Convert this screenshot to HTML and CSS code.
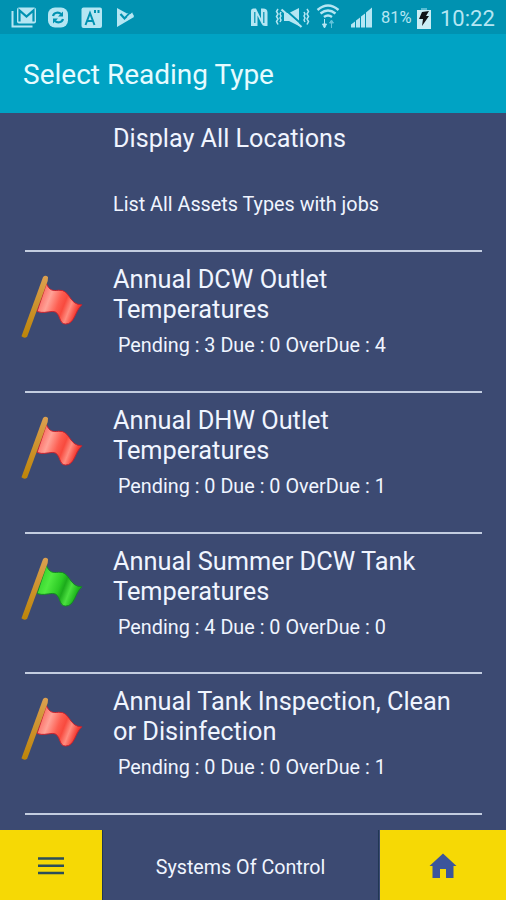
FILE: index.html
```html
<!DOCTYPE html>
<html lang="en">
<head>
  <meta charset="UTF-8" />
  <meta name="viewport" content="width=device-width, initial-scale=1.0"/>
  <title>Select Reading Type</title>
  <link rel="stylesheet" href="styles.css">
</head>
<body>
  <!-- Shared flag shape and gradients -->
  <svg class="defs" width="0" height="0">
    <defs>
      <linearGradient id="red" x1="0" y1="0" x2="1" y2="0.35">
        <stop offset="0" stop-color="#f8403a"/>
        <stop offset="0.36" stop-color="#ffa297"/>
        <stop offset="0.58" stop-color="#fd5d50"/>
        <stop offset="0.7" stop-color="#f84a3e"/>
        <stop offset="0.84" stop-color="#ff8d80"/>
        <stop offset="1" stop-color="#f53a30"/>
      </linearGradient>
      <linearGradient id="green" x1="0" y1="0" x2="1" y2="0.35">
        <stop offset="0" stop-color="#22c41e"/>
        <stop offset="0.36" stop-color="#50ea40"/>
        <stop offset="0.6" stop-color="#2ccb25"/>
        <stop offset="0.7" stop-color="#1cab1b"/>
        <stop offset="0.84" stop-color="#4ce040"/>
        <stop offset="1" stop-color="#1cb41b"/>
      </linearGradient>
      <linearGradient id="wood" x1="0" y1="0" x2="0" y2="1">
        <stop offset="0" stop-color="#dca050"/>
        <stop offset="1" stop-color="#bd8508"/>
      </linearGradient>
      <path id="cloth" d="M108 130C118 152 128 152 145 150C180 146 175 194 215 194C194 212 194 252 166 252C143 252 153 214 127 214C108 215 98 220 80 214Z"/>
      <path id="pole" d="M98 110Q105 102 113 110L112 122L50 290Q42 297 33 289Z"/>
    </defs>
  </svg>

  <div class="screen">
    <div class="status-bar">
      <svg class="icons-left" width="136" height="34" viewBox="0 0 136 34">
        <path d="M12.5 11v15.500h20" fill="none" stroke="#b5e6f3" stroke-width="2"/>
        <path d="M17 9.500q0-2 2-2h15q2 0 2 2v12q0 2-2 2h-15q-2 0-2-2z" fill="#b5e6f3"/>
        <path d="M19.500 21.500v-11l7 6 7-6v11" fill="none" stroke="#0092b1" stroke-width="2.200"/>
        <rect x="48" y="7.500" width="20" height="20" rx="7" fill="#b5e6f3"/>
        <path d="M53 16c1-4 6-4 8-2M63 19c-1 4-6 4-8 2" fill="none" stroke="#0092b1" stroke-width="2.200"/>
        <path d="M63 11.500v5h-5zM53 23.500v-5h5z" fill="#0092b1"/>
        <rect x="81.500" y="7.500" width="20.500" height="20.500" rx="2" fill="#b5e6f3"/>
        <path d="M85.500 25l4.500-12 4.500 12M87 21h6M95 10v3M98.500 10v3" fill="none" stroke="#0092b1" stroke-width="2"/>
        <path d="M117 8l10 5.500 5-1.500 2 5-17 10z" fill="#b5e6f3"/>
        <path d="M120.500 14l4 4.500 7-7" fill="none" stroke="#0092b1" stroke-width="2.200"/>
        <path d="M130 14l4 1-4 4-3-2z" fill="#b5e6f3"/>
      </svg>
      <svg class="icons-right" width="130" height="34" viewBox="246 0 130 34">
        <path d="M251 26v-15q0-2.500 2.500-2.500h2.500l5 10v-10h2q4.500 0 4.500 4v13.500h-2.500q-2.500 0-3.500-2.500l-4-8v10.500z" fill="#b5e6f3"/>
        <path d="M254.800 12v11M263.800 12v11" stroke="#0092b1" stroke-width="1.200"/>
        <g fill="none" stroke="#b5e6f3" stroke-width="1.500">
          <path d="M278 9l-1.500 2.500 1.500 2.500-1.500 2.500 1.500 2.500-1.500 2.500 1.500 3M281 12l-1 2 1 2-1 2 1 2-1 2M304 12l1 2-1 2 1 2-1 2 1 2M307 9l1.500 2.500-1.500 2.500 1.500 2.500-1.500 2.500 1.500 2.500-1.500 3"/>
        </g>
        <path d="M284 13h5l10-5v18l-10-5h-5z" fill="#b5e6f3"/>
        <path d="M284 8.500l18 16" stroke="#0092b1" stroke-width="2"/>
        <path d="M281.500 9.500l20 17.500" stroke="#b5e6f3" stroke-width="2.200"/>
        <path d="M317.500 10q10.500-9 21 0M320.500 13.500q7.500-6 15 0M324 17q4-3 8 0" fill="none" stroke="#b5e6f3" stroke-width="2.400"/>
        <path d="M324.500 19v6M322.500 24h4l-2 4z" fill="#b5e6f3" stroke="#b5e6f3"/>
        <path d="M331.500 28v-5M329.500 23l2-3 2 3z" fill="#62c3da" stroke="#62c3da"/>
        <path d="M351 27.500v-3l4-3v6zM356 27.500v-7l4-3v10zM361 27.500v-11l4-3v14zM366 27.500v-15l6-5v20z" fill="#b5e6f3"/>
      </svg>
      <span class="percent">81%</span>
      <svg class="battery" width="16" height="24" viewBox="0 0 16 24">
        <path d="M5 2h6v3h-6z" fill="#58bdd4"/>
        <path d="M1 4h14v19h-14z" fill="#c9edf5"/>
        <path d="M6 6l7-1-3 5h3l-7 10 1-7h-4z" fill="#101418"/>
      </svg>
      <span class="clock">10:22</span>
    </div>

    <header class="app-bar">Select Reading Type</header>

    <main class="list">
      <div class="item first">
        <div class="icon"></div>
        <div class="info">
          <div class="title">Display All Locations</div>
          <div class="subtitle">List All Assets Types with jobs</div>
        </div>
      </div>
      <div class="item">
        <div class="icon">
          <svg class="flag red" viewBox="20 95 210 205"><use href="#cloth"/><use href="#pole"/></svg>
        </div>
        <div class="info">
          <div class="title">Annual DCW Outlet Temperatures</div>
          <div class="counts">Pending : 3 Due : 0 OverDue : 4</div>
        </div>
      </div>
      <div class="item">
        <div class="icon">
          <svg class="flag red" viewBox="20 95 210 205"><use href="#cloth"/><use href="#pole"/></svg>
        </div>
        <div class="info">
          <div class="title">Annual DHW Outlet Temperatures</div>
          <div class="counts">Pending : 0 Due : 0 OverDue : 1</div>
        </div>
      </div>
      <div class="item">
        <div class="icon">
          <svg class="flag green" viewBox="20 95 210 205"><use href="#cloth"/><use href="#pole"/></svg>
        </div>
        <div class="info">
          <div class="title">Annual Summer DCW Tank Temperatures</div>
          <div class="counts">Pending : 4 Due : 0 OverDue : 0</div>
        </div>
      </div>
      <div class="item">
        <div class="icon">
          <svg class="flag red" viewBox="20 95 210 205"><use href="#cloth"/><use href="#pole"/></svg>
        </div>
        <div class="info">
          <div class="title">Annual Tank Inspection, Clean or Disinfection</div>
          <div class="counts">Pending : 0 Due : 0 OverDue : 1</div>
        </div>
      </div>
    </main>

    <footer class="bottom-bar">
      <button class="nav-btn menu-btn" aria-label="Menu">
        <svg width="28" height="20" viewBox="0 0 28 20"><path d="M1 2.500h26M1 9.800h26M1 17h26" stroke="#2b4e5a" stroke-width="2.600"/></svg>
      </button>
      <div class="brand">Systems Of Control</div>
      <button class="nav-btn home-btn" aria-label="Home">
        <svg width="28" height="26" viewBox="0 0 28 26"><path d="M14 0.500l13.500 12.500h-3v12h-7.500v-9h-6v9h-7.500v-12h-3z" fill="#3c559b"/></svg>
      </button>
    </footer>
  </div>
</body>
</html>
```

FILE: styles.css
```css
* {
  box-sizing: border-box;
}

body, html {
  height: 100%;
  margin: 0;
  font-family: Roboto, sans-serif;
  background-color: #3c4a72;
  color: #f0f5ff;
}

.defs {
  display: block;
}

.screen {
  display: flex;
  flex-direction: column;
  width: 506px;
  height: 900px;
  overflow: hidden;
}

.status-bar {
  display: flex;
  align-items: center;
  height: 34px;
  flex: none;
  background-color: #0092b1;
  color: #b5e6f3;
}

.icons-right {
  margin-left: 110px;
}

.percent {
  width: 35px;
  margin-left: 5px;
  padding-top: 1px;
  font-size: 16.5px;
  white-space: nowrap;
}

.battery {
  margin-top: 1px;
}

.clock {
  margin-left: 8px;
  padding-top: 2px;
  font-size: 22px;
}

.app-bar {
  flex: none;
  height: 78.500px;
  padding-left: 23px;
  line-height: 82px;
  font-size: 28px;
  color: #e6fbff;
  background-color: #00a3c4;
}

.list {
  flex: 1;
  min-height: 0;
}

.item {
  display: flex;
  height: 140.700px;
  margin: 0 24px 0 25px;
  padding-top: 12px;
  border-bottom: 2px solid #c3cde0;
}

.item.first {
  height: 139.800px;
  padding-top: 11px;
}

.icon {
  flex: none;
  width: 88px;
}

.info {
  padding-right: 16px;
}

.flag {
  display: block;
  width: 70px;
  height: 68px;
  margin: 8px 0 0 -8.500px;
}

.flag use:last-child {
  fill: url(#wood);
}

.flag.red use:first-child {
  fill: url(#red);
  stroke: #c9202c;
  stroke-width: 3px;
}

.flag.green use:first-child {
  fill: url(#green);
  stroke: #128a22;
  stroke-width: 3px;
}

.title {
  font-size: 25.350px;
  line-height: 30px;
}

.first .title {
  font-size: 25.200px;
}

.subtitle, .counts {
  font-size: 19.800px;
  line-height: 24px;
}

.counts {
  padding: 10px 0 0 5px;
}

.first .subtitle {
  margin-top: 39px;
}

.bottom-bar {
  display: flex;
  flex: none;
  height: 70px;
}

.nav-btn {
  display: flex;
  justify-content: center;
  align-items: center;
  padding: 2px 0 0;
  border: none;
  background-color: #f6d905;
}

.menu-btn {
  width: 102px;
}

.home-btn {
  width: 126px;
}

.brand {
  flex: 1;
  margin-right: 1px;
  border: 1px solid #203754;
  border-width: 0 1px;
  line-height: 76px;
  font-size: 19.700px;
  text-align: center;
  overflow: hidden;
}
```
